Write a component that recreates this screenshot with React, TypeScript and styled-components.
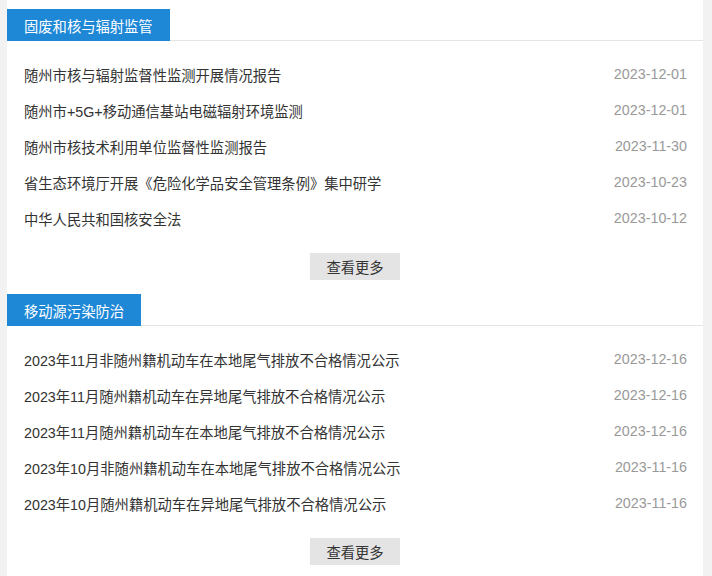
import styled, { createGlobalStyle } from "styled-components";

const GlobalStyle = createGlobalStyle`
  body {
    margin: 0;
    background: #f2f2f2;
    font-family: "Liberation Sans", "Noto Sans CJK SC", sans-serif;
  }
`;

const Panel = styled.div`
  margin: 0 9px 0 7px;
  background: #fff;
  padding: 9px 0 11px;
`;

const Section = styled.section`
  & + & {
    margin-top: 14px;
  }
`;

const Header = styled.div`
  display: flex;
  height: 31px;
  border-bottom: 1px solid #e4e4e4;
`;

const Tab = styled.h2`
  margin: 0 0 -1px;
  height: 32px;
  padding: 0 17px;
  display: flex;
  align-items: center;
  background: #1e88d7;
  color: #fff;
  font-size: 14.3px;
  font-weight: normal;
`;

const List = styled.ul`
  list-style: none;
  margin: 0;
  padding: 15px 16px 0 17px;
`;

const Item = styled.li`
  display: flex;
  justify-content: space-between;
  align-items: center;
  height: 36px;
  font-size: 14.3px;
  color: #333;
`;

const Date = styled.span`
  color: #999;
`;

const More = styled.button`
  display: block;
  margin: 17px auto 0;
  width: 90px;
  height: 27px;
  border: none;
  background: #e4e4e4;
  color: #333;
  font-family: inherit;
  font-size: 14.3px;
  padding: 0;
`;

interface INews {
  title: string;
  date: string;
}

const sections: { name: string; items: INews[] }[] = [
  {
    name: "固废和核与辐射监管",
    items: [
      { title: "随州市核与辐射监督性监测开展情况报告", date: "2023-12-01" },
      { title: "随州市+5G+移动通信基站电磁辐射环境监测", date: "2023-12-01" },
      { title: "随州市核技术利用单位监督性监测报告", date: "2023-11-30" },
      { title: "省生态环境厅开展《危险化学品安全管理条例》集中研学", date: "2023-10-23" },
      { title: "中华人民共和国核安全法", date: "2023-10-12" },
    ],
  },
  {
    name: "移动源污染防治",
    items: [
      { title: "2023年11月非随州籍机动车在本地尾气排放不合格情况公示", date: "2023-12-16" },
      { title: "2023年11月随州籍机动车在异地尾气排放不合格情况公示", date: "2023-12-16" },
      { title: "2023年11月随州籍机动车在本地尾气排放不合格情况公示", date: "2023-12-16" },
      { title: "2023年10月非随州籍机动车在本地尾气排放不合格情况公示", date: "2023-11-16" },
      { title: "2023年10月随州籍机动车在异地尾气排放不合格情况公示", date: "2023-11-16" },
    ],
  },
];

function App() {
  return (
    <>
      <GlobalStyle />
      <Panel>
        {sections.map((s) => (
          <Section key={s.name}>
            <Header>
              <Tab>{s.name}</Tab>
            </Header>
            <List>
              {s.items.map((item) => (
                <Item key={item.title}>
                  <span>{item.title}</span>
                  <Date>{item.date}</Date>
                </Item>
              ))}
            </List>
            <More>查看更多</More>
          </Section>
        ))}
      </Panel>
    </>
  );
}

export default App;
